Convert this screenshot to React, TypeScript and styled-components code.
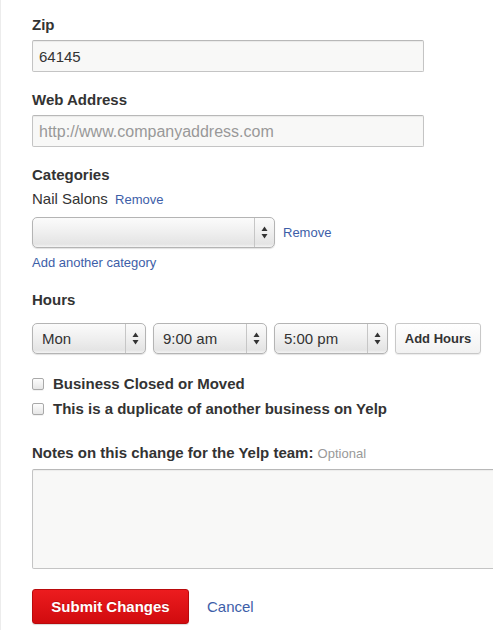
import styled, { createGlobalStyle } from "styled-components";

const GlobalStyle = createGlobalStyle`
  html, body {
    margin: 0;
    padding: 0;
    background: #fff;
    overflow: hidden;
  }
  body {
    font-family: "Liberation Sans", Arial, sans-serif;
    color: #333;
  }
`;

const Arrows = () => (
  <svg width="7" height="13" viewBox="0 0 7 13">
    <path d="M3.5 0.5 L6.5 5 L0.5 5 Z" fill="#333" />
    <path d="M3.5 12.5 L6.5 8 L0.5 8 Z" fill="#333" />
  </svg>
);

type SelectProps = { label?: string; width: number };

const Select = ({ label, width }: SelectProps) => (
  <SelectBox $width={width}>
    <SelectValue>{label}</SelectValue>
    <SelectArrow>
      <Arrows />
    </SelectArrow>
  </SelectBox>
);

const App = () => {
  return (
    <>
      <GlobalStyle />
      <Page>
        <Label>Zip</Label>
        <TextInput defaultValue="64145" />

        <Label $top={19}>Web Address</Label>
        <TextInput placeholder="http://www.companyaddress.com" />

        <Label $top={19}>Categories</Label>
        <CategoryLine>
          Nail Salons <SmallLink $gap={3}>Remove</SmallLink>
        </CategoryLine>
        <CategoryRow>
          <Select width={243} />
          <SmallLink $gap={3}>Remove</SmallLink>
        </CategoryRow>
        <AddLink>Add another category</AddLink>

        <Label $top={20}>Hours</Label>
        <HoursRow>
          <Select label="Mon" width={114} />
          <Select label="9:00 am" width={114} />
          <Select label="5:00 pm" width={114} />
          <GrayButton>Add Hours</GrayButton>
        </HoursRow>

        <Checks>
          <CheckRow>
            <CheckBox />
            Business Closed or Moved
          </CheckRow>
          <CheckRow>
            <CheckBox />
            This is a duplicate of another business on Yelp
          </CheckRow>
        </Checks>

        <Label $top={26}>
          Notes on this change for the Yelp team: <Optional>Optional</Optional>
        </Label>
        <Notes />

        <Actions>
          <SubmitButton>Submit Changes</SubmitButton>
          <CancelLink>Cancel</CancelLink>
        </Actions>
      </Page>
    </>
  );
};

export default App;

const Page = styled.div`
  display: flex;
  flex-direction: column;
  align-items: flex-start;
  padding: 16px 0 0 31px;
  height: 630px;
  box-sizing: border-box;
  border-left: 1px solid #ececec;
`;

const Label = styled.div<{ $top?: number }>`
  font-size: 15px;
  line-height: 18px;
  font-weight: bold;
  color: #333;
  margin-top: ${(p) => p.$top ?? 0}px;
  margin-bottom: 6px;
  white-space: nowrap;
`;

const TextInput = styled.input`
  box-sizing: border-box;
  width: 392px;
  height: 32px;
  margin: 0;
  padding: 0 6px;
  font-family: "Liberation Sans", Arial, sans-serif;
  font-size: 15px;
  color: #333;
  background: #f8f8f7;
  border: 1px solid #c4c4c4;
  border-top-color: #b8b8b8;
  border-radius: 2px;
  box-shadow: inset 0 1px 1px rgba(0, 0, 0, 0.06);
  outline: none;

  &::placeholder {
    color: #999;
    font-size: 16px;
  }
`;

const CategoryLine = styled.div`
  font-size: 15px;
  line-height: 18px;
  color: #333;
`;

const SmallLink = styled.a<{ $gap: number }>`
  font-size: 13px;
  color: #3d5ea8;
  text-decoration: none;
  margin-left: ${(p) => p.$gap}px;
  cursor: pointer;
`;

const CategoryRow = styled.div`
  display: flex;
  align-items: center;
  gap: 5px;
  margin-top: 8px;
`;

const SelectBox = styled.div<{ $width: number }>`
  box-sizing: border-box;
  width: ${(p) => p.$width}px;
  height: 31px;
  display: flex;
  align-items: stretch;
  border: 1px solid #b4b4b4;
  border-radius: 5px;
  background: linear-gradient(#fbfbfb, #efefef 50%, #e4e4e4 90%, #f4f4f4);
  box-shadow: 0 1px 1px rgba(0, 0, 0, 0.12);
`;

const SelectValue = styled.span`
  flex: 1;
  display: flex;
  align-items: center;
  padding-left: 9px;
  font-size: 15px;
  color: #333;
  white-space: nowrap;
`;

const SelectArrow = styled.span`
  width: 19px;
  display: flex;
  align-items: center;
  justify-content: center;
  border-left: 1px solid #c6c6c6;
`;

const AddLink = styled.a`
  font-size: 13px;
  line-height: 16px;
  color: #3d5ea8;
  text-decoration: none;
  margin-top: 7px;
  cursor: pointer;
`;

const HoursRow = styled.div`
  display: flex;
  gap: 7px;
  margin-top: 8px;
`;

const GrayButton = styled.button`
  box-sizing: border-box;
  width: 86px;
  height: 31px;
  padding: 0;
  font-family: "Liberation Sans", Arial, sans-serif;
  font-size: 13px;
  font-weight: bold;
  color: #333;
  background: linear-gradient(#ffffff, #f1f1f1);
  border: 1px solid #c8c8c8;
  border-radius: 3px;
  box-shadow: 0 1px 1px rgba(0, 0, 0, 0.08);
`;

const Checks = styled.div`
  display: flex;
  flex-direction: column;
  gap: 7px;
  margin-top: 21px;
`;

const CheckRow = styled.label`
  display: flex;
  align-items: center;
  gap: 9px;
  font-size: 15px;
  line-height: 18px;
  font-weight: bold;
  color: #333;
  white-space: nowrap;
`;

const CheckBox = styled.span`
  box-sizing: border-box;
  width: 12px;
  height: 12px;
  border: 1px solid #a9a9a9;
  border-radius: 2px;
  background: linear-gradient(#fdfdfd, #e6e6e6);
  box-shadow: 0 1px 0 rgba(0, 0, 0, 0.05);
`;

const Optional = styled.span`
  font-size: 13px;
  font-weight: normal;
  color: #999;
`;

const Notes = styled.div`
  box-sizing: border-box;
  width: 480px;
  height: 100px;
  background: #f8f8f7;
  border: 1px solid #c4c4c4;
  border-top-color: #b8b8b8;
  border-radius: 2px;
  box-shadow: inset 0 1px 1px rgba(0, 0, 0, 0.05);
`;

const Actions = styled.div`
  display: flex;
  align-items: center;
  gap: 18px;
  margin-top: 20px;
`;

const SubmitButton = styled.button`
  box-sizing: border-box;
  width: 157px;
  height: 35px;
  padding: 0;
  font-family: "Liberation Sans", Arial, sans-serif;
  font-size: 15px;
  font-weight: bold;
  color: #fff;
  text-shadow: 0 -1px 0 rgba(0, 0, 0, 0.2);
  background: linear-gradient(#ec1c1f, #d10b0e);
  border: 1px solid #b90a0c;
  border-radius: 3px;
  box-shadow: 0 1px 1px rgba(0, 0, 0, 0.15);
`;

const CancelLink = styled.a`
  font-size: 15px;
  color: #3d5ea8;
  text-decoration: none;
  cursor: pointer;
`;
